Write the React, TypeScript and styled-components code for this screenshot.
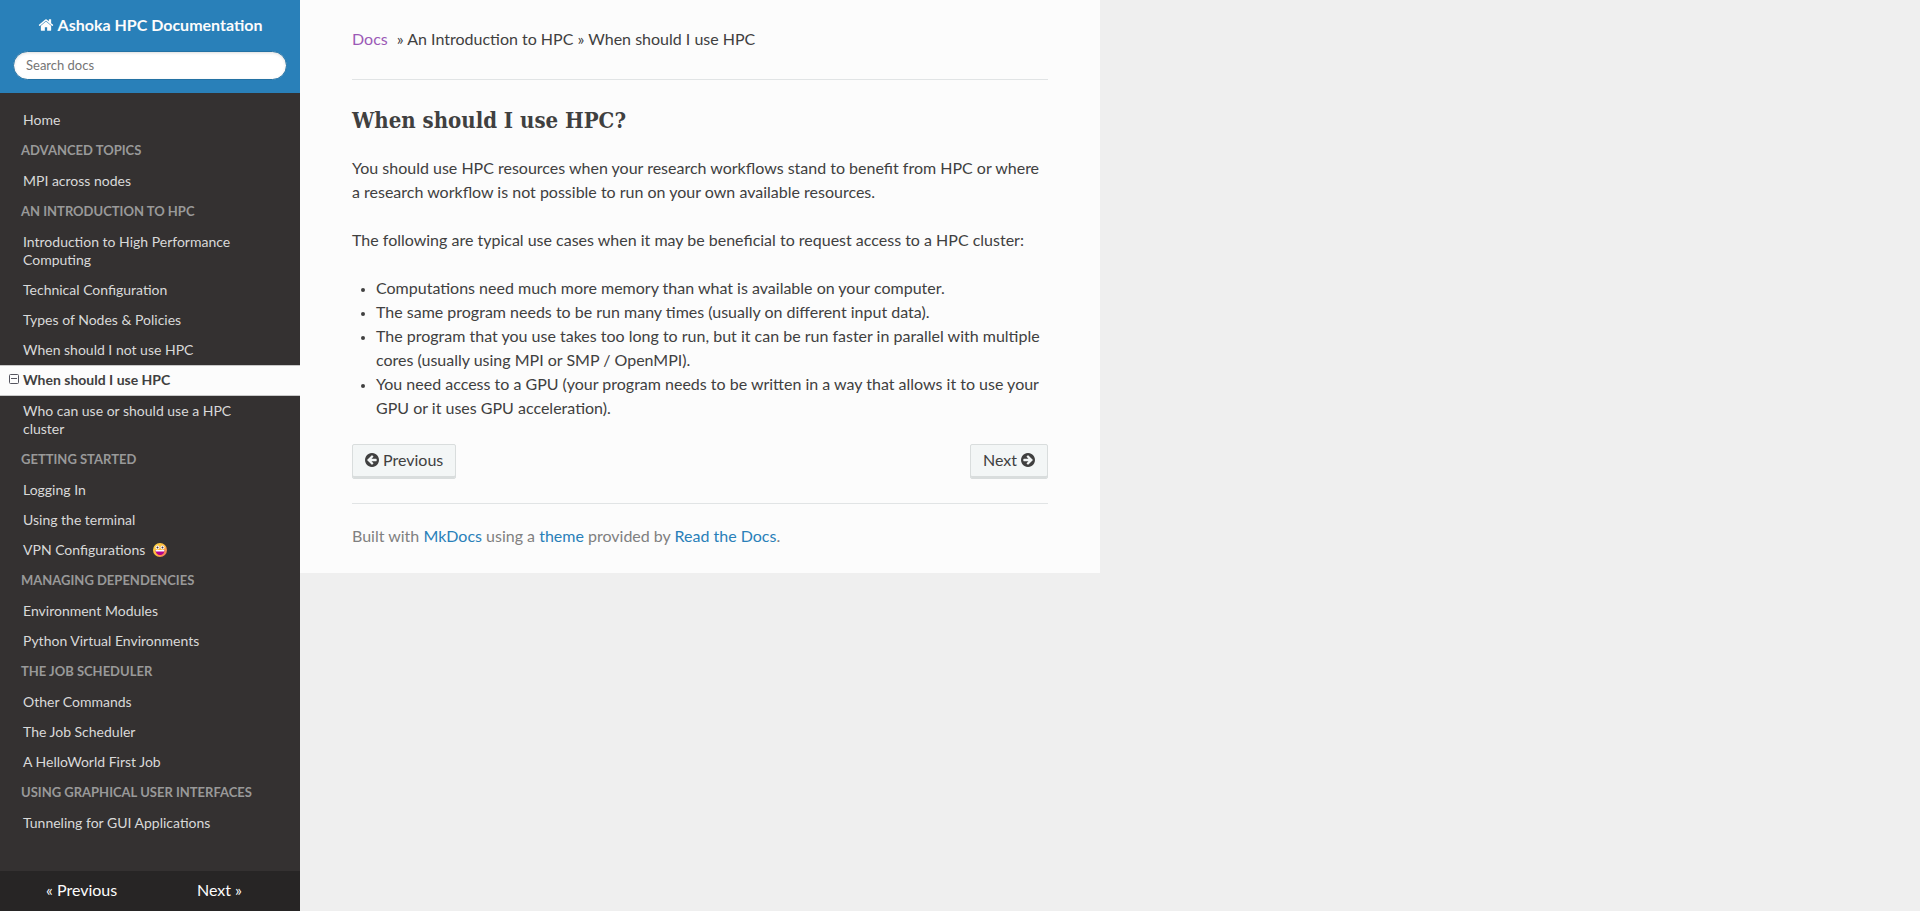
import React from "react";
import styled, { createGlobalStyle, css } from "styled-components";

const GlobalStyle = createGlobalStyle`
  *, *::before, *::after { box-sizing: border-box; }
  body {
    margin: 0;
    background: #efefef;
    color: #404040;
    font-family: Lato, "Open Sans", sans-serif;
    font-size: 16px;
    line-height: 24px;
  }
`;

const Page = styled.div`
  display: flex;
  min-height: 100vh;
`;

const Sidebar = styled.nav`
  position: sticky;
  top: 0;
  display: flex;
  flex-direction: column;
  flex: none;
  width: 300px;
  height: 100vh;
  background: #343131;
`;

const SidebarHeader = styled.div`
  display: flex;
  flex-direction: column;
  align-items: center;
  gap: 14px;
  padding: 13px;
  background: #2980b9;
`;

const SiteTitle = styled.a`
  color: #fcfcfc;
  font-weight: 700;
  text-decoration: none;
  svg {
    margin-right: 4px;
    vertical-align: -2px;
  }
`;

const SearchForm = styled.form`
  width: 100%;
`;

const SearchInput = styled.input`
  display: block;
  width: 100%;
  height: 29px;
  padding: 0 12px 2px;
  border: 1px solid #2472a4;
  border-radius: 50px;
  background: #fff;
  box-shadow: inset 0 1px 3px #ddd;
  font-family: inherit;
  font-size: 13px;
  &::placeholder { color: #757575; }
`;

const Menu = styled.div`
  flex: 1;
  min-height: 0;
  overflow: hidden;
  padding-top: 12px;
`;

const Caption = styled.p`
  margin: 0;
  padding: 0 21px;
  color: #999;
  font-size: 13px;
  font-weight: 700;
  line-height: 31px;
  text-transform: uppercase;
  white-space: nowrap;
`;

const MenuList = styled.ul`
  margin: 0;
  padding: 0;
  list-style: none;
`;

const MenuLink = styled.a<{ $current?: boolean }>`
  position: relative;
  display: block;
  padding: 6px 32px 6px 23px;
  color: #d9d9d9;
  font-size: 14px;
  line-height: 18px;
  text-decoration: none;
  ${(p) =>
    p.$current &&
    css`
      padding-top: 5px;
      border: solid #c9c9c9;
      border-width: 1px 0;
      background: #fcfcfc;
      color: #404040;
      font-weight: 700;
    `}
`;

const Toggle = styled.svg`
  position: absolute;
  top: 8px;
  left: 9px;
`;

const Face = styled.svg`
  margin-left: 4px;
  vertical-align: -2px;
`;

const SidebarFooter = styled.div`
  display: grid;
  grid-template-columns: 1fr 1fr;
  padding: 7px 0 9px 46px;
  background: #272525;
`;

const FooterLink = styled.a<{ $shift?: boolean }>`
  padding-left: ${(p) => (p.$shift ? "24px" : "0")};
  color: #fcfcfc;
  text-decoration: none;
`;

const Content = styled.main`
  flex: 1 1 0;
  min-width: 0;
  max-width: 800px;
  align-self: flex-start;
  padding: 27px 52px 25px;
  background: #fcfcfc;
`;

const Breadcrumbs = styled.ul`
  display: flex;
  margin: 0;
  padding: 0 0 4px;
  list-style: none;
  white-space: pre;
`;

const TextLink = styled.a<{ $visited?: boolean }>`
  color: ${(p) => (p.$visited ? "#9b59b6" : "#2980b9")};
  text-decoration: none;
`;

const Crumb = styled.li`
  ${TextLink} { padding-right: 5px; }
`;

const Rule = styled.hr`
  height: 1px;
  margin: 24px 0 20px;
  border: 0;
  background: #e1e4e5;
`;

const Heading = styled.h1`
  margin: 0 0 16px;
  font-family: "Roboto Slab", "DejaVu Serif Condensed", "DejaVu Serif", serif;
  font-size: 22px;
  font-weight: 700;
  line-height: 40px;
`;

const Paragraph = styled.p`
  margin: 0 0 24px;
`;

const BulletList = styled.ul`
  margin: 0 0 24px;
  padding: 0 0 0 24px;
  list-style: disc;
  li::marker { font-size: 12px; }
`;

const Pager = styled.div`
  display: flex;
  justify-content: space-between;
`;

const PagerLink = styled.a`
  display: flex;
  align-items: center;
  gap: 4px;
  height: 35px;
  padding: 0 12px 4px;
  border: 1px solid #d9dddd;
  border-radius: 2px;
  background: #f3f6f6;
  box-shadow: inset 0 -2px 0 #d9dddd;
  color: #404040;
  text-decoration: none;
`;

const Credit = styled.footer`
  color: #808080;
`;

const HomeIcon = () => (
  <svg width="16" height="16" viewBox="0 0 1792 1792" fill="currentColor" aria-hidden="true">
    <path d="M1472 992v480q0 26-19 45t-45 19h-384v-384h-256v384h-384q-26 0-45-19t-19-45v-480q0-1 .5-3t.5-3l575-474 575 474q1 2 1 6zm223-69l-62 74q-8 9-21 11h-3q-13 0-21-7l-692-577-692 577q-12 8-24 7-13-2-21-11l-62-74q-8-10-7-23.5t11-21.5l719-599q32-26 76-26t76 26l244 204v-195q0-14 9-23t23-9h192q14 0 23 9t9 23v408l219 182q10 8 11 21.5t-7 23.5z" />
  </svg>
);

const ArrowIcon = ({ right }: { right?: boolean }) => (
  <svg width="14" height="14" viewBox="128 128 1536 1536" fill="currentColor" aria-hidden="true">
    <path
      transform={right ? "rotate(180 896 896)" : undefined}
      d="M1408 960v-128q0-26-19-45t-45-19h-502l189-189q19-19 19-45t-19-45l-91-91q-18-18-45-18t-45 18l-362 362-91 91q-18 18-18 45t18 45l91 91 362 362q18 18 45 18t45-18l91-91q18-18 18-45t-18-45l-189-189h502q26 0 45-19t19-45zm256-64q0 209-103 385.5t-279.5 279.5-385.5 103-385.5-103-279.5-279.5-103-385.5 103-385.5 279.5-279.5 385.5-103 385.5 103 279.5 279.5 103 385.5z"
    />
  </svg>
);

const CollapseIcon = () => (
  <Toggle width="10" height="10" viewBox="0 0 10 10" fill="none" stroke="#55555f" aria-hidden="true">
    <rect x="0.5" y="0.5" width="9" height="9" rx="1" />
    <path d="M2 4.5h6" />
  </Toggle>
);

const GrinIcon = () => (
  <Face width="14" height="14" viewBox="0 0 28 28" role="img" aria-label="grinning face">
    <defs>
      <linearGradient id="face" x1="0" y1="0" x2="1" y2="1">
        <stop offset="0" stopColor="#ffdc4a" />
        <stop offset="0.55" stopColor="#ffb53c" />
        <stop offset="1" stopColor="#f0586c" />
      </linearGradient>
    </defs>
    <circle cx="14" cy="14" r="14" fill="url(#face)" />
    <circle cx="9" cy="9" r="4" fill="#fff" />
    <circle cx="19" cy="9" r="4" fill="#fff" />
    <circle cx="9" cy="9" r="2" fill="#4a3040" />
    <circle cx="19" cy="9" r="2" fill="#4a3040" />
    <path d="M5 14h18c0 6-4 10-9 10s-9-4-9-10z" fill="#b4008c" />
    <path d="M5 14h18l-1 3H6z" fill="#fff" />
  </Face>
);

type Item = { label: string; current?: boolean; face?: boolean };

const sections: { caption?: string; items: Item[] }[] = [
  { items: [{ label: "Home" }] },
  { caption: "Advanced Topics", items: [{ label: "MPI across nodes" }] },
  {
    caption: "An Introduction to HPC",
    items: [
      { label: "Introduction to High Performance Computing" },
      { label: "Technical Configuration" },
      { label: "Types of Nodes & Policies" },
      { label: "When should I not use HPC" },
      { label: "When should I use HPC", current: true },
      { label: "Who can use or should use a HPC cluster" },
    ],
  },
  {
    caption: "Getting Started",
    items: [{ label: "Logging In" }, { label: "Using the terminal" }, { label: "VPN Configurations", face: true }],
  },
  { caption: "Managing Dependencies", items: [{ label: "Environment Modules" }, { label: "Python Virtual Environments" }] },
  {
    caption: "The Job Scheduler",
    items: [{ label: "Other Commands" }, { label: "The Job Scheduler" }, { label: "A HelloWorld First Job" }],
  },
  { caption: "Using Graphical User Interfaces", items: [{ label: "Tunneling for GUI Applications" }] },
];

const useCases = [
  "Computations need much more memory than what is available on your computer.",
  "The same program needs to be run many times (usually on different input data).",
  "The program that you use takes too long to run, but it can be run faster in parallel with multiple cores (usually using MPI or SMP / OpenMPI).",
  "You need access to a GPU (your program needs to be written in a way that allows it to use your GPU or it uses GPU acceleration).",
];

export default function App() {
  return (
    <>
      <GlobalStyle />
      <Page>
        <Sidebar aria-label="Documentation">
          <SidebarHeader>
            <SiteTitle href="#home">
              <HomeIcon />
              Ashoka HPC Documentation
            </SiteTitle>
            <SearchForm role="search">
              <SearchInput type="text" placeholder="Search docs" aria-label="Search docs" />
            </SearchForm>
          </SidebarHeader>
          <Menu>
            {sections.map((section, i) => (
              <React.Fragment key={i}>
                {section.caption && <Caption>{section.caption}</Caption>}
                <MenuList>
                  {section.items.map((item) => (
                    <li key={item.label}>
                      <MenuLink href="#page" $current={item.current} aria-current={item.current ? "page" : undefined}>
                        {item.current && <CollapseIcon />}
                        {item.label}
                        {item.face && <> <GrinIcon /></>}
                      </MenuLink>
                    </li>
                  ))}
                </MenuList>
              </React.Fragment>
            ))}
          </Menu>
          <SidebarFooter>
            <FooterLink href="#previous">« Previous</FooterLink>
            <FooterLink href="#next" $shift>Next »</FooterLink>
          </SidebarFooter>
        </Sidebar>
        <Content>
          <Breadcrumbs>
            <Crumb><TextLink href="#docs" $visited>Docs</TextLink></Crumb>
            <Crumb> » An Introduction to HPC</Crumb>
            <Crumb> » When should I use HPC</Crumb>
          </Breadcrumbs>
          <Rule />
          <Heading>When should I use HPC?</Heading>
          <Paragraph>
            You should use HPC resources when your research workflows stand to benefit from HPC or where a research
            workflow is not possible to run on your own available resources.
          </Paragraph>
          <Paragraph>
            The following are typical use cases when it may be beneficial to request access to a HPC cluster:
          </Paragraph>
          <BulletList>
            {useCases.map((text) => (
              <li key={text}>{text}</li>
            ))}
          </BulletList>
          <Pager>
            <PagerLink href="#previous"><ArrowIcon />Previous</PagerLink>
            <PagerLink href="#next">Next<ArrowIcon right /></PagerLink>
          </Pager>
          <Rule />
          <Credit>
            Built with <TextLink href="#mkdocs">MkDocs</TextLink> using a <TextLink href="#theme">theme</TextLink>{" "}
            provided by <TextLink href="#readthedocs">Read the Docs</TextLink>.
          </Credit>
        </Content>
      </Page>
    </>
  );
}
